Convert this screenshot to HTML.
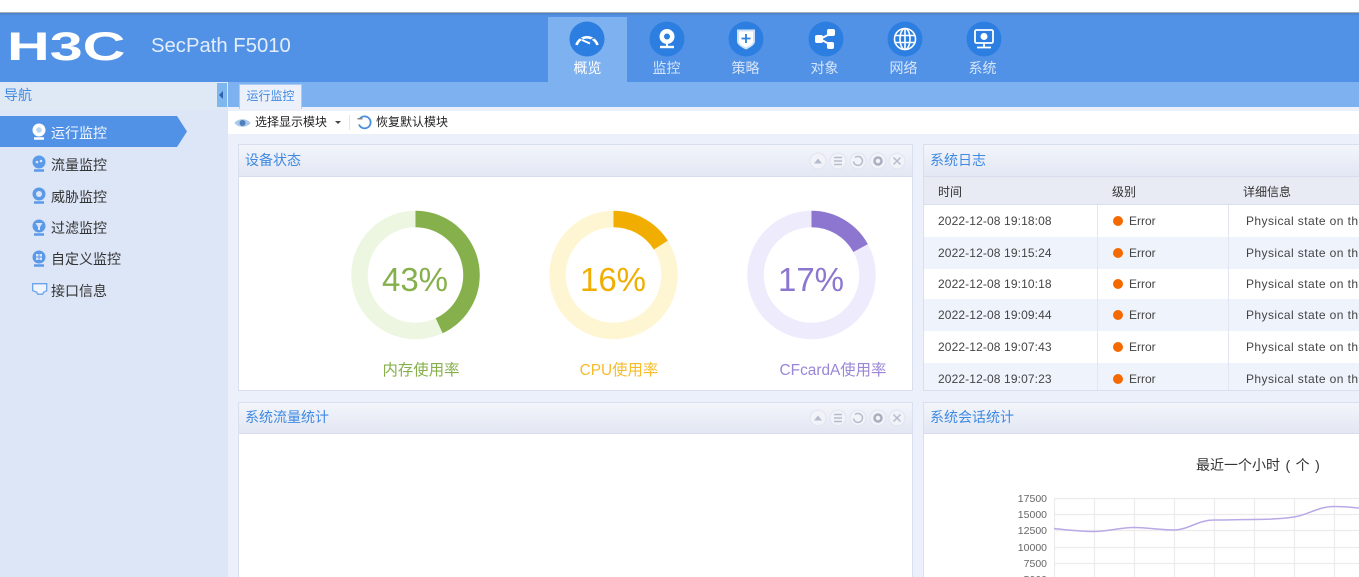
<!DOCTYPE html>
<html lang="zh-CN"><head><meta charset="utf-8"><title>SecPath F5010</title>
<style>
*{box-sizing:border-box}
html,body{margin:0;padding:0;width:1359px;height:577px;overflow:hidden;background:#fff}
body{position:relative;font-family:"Liberation Sans","Noto Sans CJK SC",sans-serif;font-size:14px;color:#333}
.a{position:absolute;white-space:nowrap}
.tab{position:absolute;top:60px;width:79px;text-align:center;color:#d6e5fa;font-size:14px;line-height:16px}
.ic{position:absolute;top:21px;width:36px;height:36px}
.nav{position:absolute;left:51px;font-size:14px;line-height:18px;color:#333}
.panel{position:absolute;background:#fff;border:1px solid #dadff0}
.ph{position:absolute;left:0;right:0;top:0;height:32px;background:linear-gradient(#f3f5fb,#e3e7f3);border-bottom:1px solid #d8ddee}
.pt{position:absolute;left:6px;top:7px;color:#3f8ae2;font-size:14px;line-height:17px}
.btns{position:absolute;left:570px;top:6px}
.row{position:absolute;left:0;width:436px;height:32px;font-size:12px;color:#444;line-height:16px}
.row span{position:absolute;top:8px;white-space:nowrap}
.row span:first-child{letter-spacing:.12px}
.row span:last-child{letter-spacing:.42px}
.dot{position:absolute;left:189px;top:11px;width:10px;height:10px;border-radius:50%;background:#f56a00}
.vl{position:absolute;width:1px;top:60px;height:213px;background:#e3e6f0}
.ytick{position:absolute;width:30px;text-align:right;left:1017px;font-size:10.5px;line-height:12px;color:#666}
</style></head><body>
<div class="a" style="left:0;top:0;width:1359px;height:13px;background:#fff;border-bottom:1px solid #aab0b8"></div>
<div class="a" style="left:0;top:13px;width:1359px;height:69px;background:#5292e6"></div>
<div class="a" style="left:0;top:13px;width:1359px;height:3px;background:linear-gradient(#4a80c8,#5292e6)"></div>
<div class="a" style="left:7px;top:22px;width:60px;height:50px;color:#fff;font:bold 40px/50px 'Liberation Sans',sans-serif;transform-origin:0 50%;transform:scaleX(1.48)">H3C</div>
<div class="a" style="left:151px;top:33px;color:#e4eefb;font-size:20.3px;line-height:26px">SecPath F5010</div>

<div class="a" style="left:548px;top:17px;width:79px;height:65px;background:#7eb1ef"></div>
<svg class="ic" style="left:569px" viewBox="0 0 36 36"><circle cx="18" cy="18" r="17.5" fill="#2c7fe0"/><path d="M7.500 24a11 11 0 0 1 21 0" fill="none" stroke="#fff" stroke-width="2.600"/><path d="M11 17l3 1.500M18 12v3M25 17l-3 1.500M13 19l8 3.500" stroke="#2c7fe0" stroke-width="1.200"/><path d="M13 19l8 3.500" stroke="#fff" stroke-width="1.800"/></svg>
<svg class="ic" style="left:649px" viewBox="0 0 36 36"><circle cx="18" cy="18" r="17.5" fill="#2c7fe0"/><circle cx="18" cy="15.500" r="7.500" fill="#fff"/><circle cx="18" cy="15.500" r="3" fill="#2c7fe0"/><path d="M11 26h14" stroke="#fff" stroke-width="2.400"/><path d="M18 22v3" stroke="#fff" stroke-width="2"/></svg>
<svg class="ic" style="left:728px" viewBox="0 0 36 36"><circle cx="18" cy="18" r="17.5" fill="#2c7fe0"/><path d="M9 8.500h18v12c0 3-4.500 6-9 8-4.500-2-9-5-9-8z" fill="#cfe1f8"/><path d="M11 10.500h14v10c0 2.500-3.500 4.500-7 6-3.500-1.500-7-3.500-7-6z" fill="#fff"/><path d="M18 13v9M13.500 17.500h9" stroke="#2c7fe0" stroke-width="1.800"/></svg>
<svg class="ic" style="left:808px" viewBox="0 0 36 36"><circle cx="18" cy="18" r="17.500" fill="#2c7fe0"/><path d="M12 18L24 12M12 18l11 6" stroke="#fff" stroke-width="2"/><rect x="7" y="14" width="8" height="8" rx="2" fill="#fff"/><rect x="19" y="8" width="8" height="7" rx="2" fill="#fff"/><rect x="19" y="21" width="7" height="7" rx="2" fill="#fff"/></svg>
<svg class="ic" style="left:887px" viewBox="0 0 36 36"><circle cx="18" cy="18" r="17.500" fill="#2c7fe0"/><g fill="none" stroke="#fff" stroke-width="1.600"><circle cx="18" cy="18" r="10.500"/><ellipse cx="18" cy="18" rx="5" ry="10.500"/><path d="M18 7.500v21M8 14.500h20M8 21.500h20"/></g></svg>
<svg class="ic" style="left:966px" viewBox="0 0 36 36"><circle cx="18" cy="18" r="17.500" fill="#2c7fe0"/><rect x="9" y="9" width="18" height="13" rx="1.500" fill="none" stroke="#fff" stroke-width="1.800"/><circle cx="18" cy="15.500" r="3.500" fill="#fff"/><path d="M18 22v4M11 26.500h14" stroke="#fff" stroke-width="1.800"/></svg>
<div class="tab" style="left:548px;color:#fff">概览</div>
<div class="tab" style="left:627px">监控</div>
<div class="tab" style="left:706px">策略</div>
<div class="tab" style="left:785px">对象</div>
<div class="tab" style="left:864px">网络</div>
<div class="tab" style="left:943px">系统</div>

<div class="a" style="left:0;top:82px;width:228px;height:495px;background:#dde6f7"></div>
<div class="a" style="left:0;top:82px;width:227px;height:28px;background:#dfe9f6"></div>
<div class="a" style="left:4px;top:87px;color:#3f8ae2;font-size:14px;line-height:17px">导航</div>
<div class="a" style="left:217px;top:83px;width:10px;height:24px;background:#7eb6ee"></div>
<div class="a" style="left:219px;top:91px;width:0;height:0;border:4px solid transparent;border-right:4px solid #2a63b0;border-left:0"></div>
<svg class="a" style="left:0;top:116px" width="188" height="31"><path d="M0 0H177L187 15.500 177 31H0z" fill="#5292e6"/></svg>
<svg class="a" style="left:32px;top:123px" width="14" height="17" viewBox="0 0 14 17"><circle cx="7" cy="7" r="6.500" fill="#fff"/><circle cx="7" cy="7" r="2.800" fill="#bcd5f3"/><path d="M2 15.500h10" stroke="#fff" stroke-width="2.500"/></svg>
<div class="nav" style="top:124px;color:#f2f7fe">运行监控</div>
<svg class="a" style="left:32px;top:155px" width="14" height="17" viewBox="0 0 14 17"><circle cx="7" cy="7" r="6.500" fill="#5b9ae8"/><circle cx="5" cy="7" r="1.300" fill="#dde6f7"/><circle cx="9" cy="6" r="1.300" fill="#dde6f7"/><path d="M2 15.500h10" stroke="#5b9ae8" stroke-width="2.500"/></svg>
<div class="nav" style="top:156px">流量监控</div>
<svg class="a" style="left:32px;top:187px" width="14" height="17" viewBox="0 0 14 17"><circle cx="7" cy="7" r="6.500" fill="#5b9ae8"/><circle cx="7" cy="7" r="3" fill="#dde6f7"/><path d="M2 15.500h10" stroke="#5b9ae8" stroke-width="2.500"/></svg>
<div class="nav" style="top:188px">威胁监控</div>
<svg class="a" style="left:32px;top:219px" width="14" height="17" viewBox="0 0 14 17"><circle cx="7" cy="7" r="6.500" fill="#5b9ae8"/><path d="M3.500 4h7L8 8v3H6V8z" fill="#dde6f7"/><path d="M2 15.500h10" stroke="#5b9ae8" stroke-width="2.500"/></svg>
<div class="nav" style="top:219px">过滤监控</div>
<svg class="a" style="left:32px;top:250px" width="14" height="17" viewBox="0 0 14 17"><circle cx="7" cy="7" r="6.500" fill="#5b9ae8"/><path d="M4 4h2.500v2.500H4zM7.500 4H10v2.500H7.500zM4 7.500h2.500V10H4zM7.500 7.500H10V10H7.500z" fill="#dde6f7"/><path d="M2 15.500h10" stroke="#5b9ae8" stroke-width="2.500"/></svg>
<div class="nav" style="top:250px">自定义监控</div>
<svg class="a" style="left:32px;top:283px" width="16" height="13" viewBox="0 0 16 13"><path d="M.7.700h14v7l-3 1.500-1 2H5.700l-1-2-4-1.500z" fill="#eef3fc" stroke="#6ba3ea" stroke-width="1.300"/></svg>
<div class="nav" style="top:282px">接口信息</div>

<div class="a" style="left:228px;top:82px;width:1131px;height:495px;background:#ecf0fa"></div>
<div class="a" style="left:228px;top:82px;width:1131px;height:25px;background:#7eb1ef"></div>
<div class="a" style="left:239px;top:84px;width:63px;height:25px;background:#ecf0fa;border:1px solid #a9ccf3;border-bottom:0;color:#3f8ae2;font-size:12px;line-height:22px;text-align:center">运行监控</div>
<div class="a" style="left:228px;top:111px;width:1131px;height:23px;background:#fff"></div>
<svg class="a" style="left:234px;top:117px" width="17" height="12" viewBox="0 0 17 12"><path d="M.5 6C4 1 13 1 16.500 6 13 11 4 11 .5 6z" fill="#a9c8ee"/><circle cx="8.500" cy="6" r="3" fill="#4e7fb8"/></svg>
<div class="a" style="left:255px;top:114px;font-size:12px;line-height:16px;color:#222">选择显示模块</div>
<div class="a" style="left:335px;top:121px;width:0;height:0;border:3px solid transparent;border-top:3px solid #444;border-bottom:0"></div>
<div class="a" style="left:349px;top:115px;width:1px;height:15px;background:#e4e7ef"></div>
<svg class="a" style="left:357px;top:115px" width="15" height="15" viewBox="0 0 15 15"><path d="M3 3.500A6 6 0 1 1 2 9.500" fill="none" stroke="#4a8fdc" stroke-width="1.800"/><path d="M.5 3h5v1.500h-5z" fill="#888"/></svg>
<div class="a" style="left:376px;top:114px;font-size:12px;line-height:16px;color:#222">恢复默认模块</div>

<!-- device state -->
<div class="panel" style="left:238px;top:144px;width:675px;height:247px">
 <div class="ph"></div><div class="pt">设备状态</div>
 <svg class="btns" width="100" height="20" viewBox="0 0 100 20"><g fill="#f1f3f9" stroke="#e0e4ef"><circle cx="9" cy="10" r="8"/><circle cx="29" cy="10" r="8"/><circle cx="49" cy="10" r="8"/><circle cx="69" cy="10" r="8"/><circle cx="88" cy="10" r="8"/></g><path d="M5 12.500l4-5 4 5z" fill="#b6bccb"/><path d="M25 6.500h8M25 10h8M25 13.500h8" stroke="#b6bccb" stroke-width="1.500"/><path d="M46 6.500a4.500 4.500 0 1 1-1.500 4" fill="none" stroke="#b6bccb" stroke-width="1.500"/><circle cx="69" cy="10" r="3.500" fill="none" stroke="#a9afbf" stroke-width="2.500"/><path d="M84.500 6.500l7 7M91.500 6.500l-7 7" stroke="#b6bccb" stroke-width="1.500"/></svg>
</div>
<svg class="a" style="left:340px;top:200px" width="560" height="150" viewBox="340 200 560 150">
 <g fill="none" stroke-width="16.500">
 <circle cx="415.500" cy="275" r="56" stroke="#edf6e1"/>
 <circle cx="415.500" cy="275" r="56" stroke="#85b04b" stroke-dasharray="151.300 352" transform="rotate(-90 415.500 275)"/>
 <circle cx="613.500" cy="275" r="56" stroke="#fef6d2"/>
 <circle cx="613.500" cy="275" r="56" stroke="#f2ae00" stroke-dasharray="56.300 352" transform="rotate(-90 613.500 275)"/>
 <circle cx="811.500" cy="275" r="56" stroke="#eeebfc"/>
 <circle cx="811.500" cy="275" r="56" stroke="#8d76cf" stroke-dasharray="59.800 352" transform="rotate(-90 811.500 275)"/>
 </g>
</svg>
<div class="a" style="left:365px;top:260px;width:100px;text-align:center;font-size:33px;line-height:40px;color:#85b04b">43%</div>
<div class="a" style="left:563px;top:260px;width:100px;text-align:center;font-size:33px;line-height:40px;color:#f2ae00">16%</div>
<div class="a" style="left:761px;top:260px;width:100px;text-align:center;font-size:33px;line-height:40px;color:#8d76cf">17%</div>
<div class="a" style="left:371px;top:362px;width:100px;text-align:center;color:#85b04b;font-size:15.400px;line-height:18px">内存使用率</div>
<div class="a" style="left:569px;top:362px;width:100px;text-align:center;color:#f5bb2a;font-size:15.400px;line-height:18px">CPU使用率</div>
<div class="a" style="left:773px;top:362px;width:120px;text-align:center;color:#9a86d6;font-size:15.400px;line-height:18px">CFcardA使用率</div>

<!-- traffic -->
<div class="panel" style="left:238px;top:402px;width:675px;height:180px">
 <div class="ph" style="height:31px"></div><div class="pt" style="top:6px">系统流量统计</div>
 <svg class="btns" style="top:5px" width="100" height="20" viewBox="0 0 100 20"><g fill="#f1f3f9" stroke="#e0e4ef"><circle cx="9" cy="10" r="8"/><circle cx="29" cy="10" r="8"/><circle cx="49" cy="10" r="8"/><circle cx="69" cy="10" r="8"/><circle cx="88" cy="10" r="8"/></g><path d="M5 12.500l4-5 4 5z" fill="#b6bccb"/><path d="M25 6.500h8M25 10h8M25 13.500h8" stroke="#b6bccb" stroke-width="1.500"/><path d="M46 6.500a4.500 4.500 0 1 1-1.500 4" fill="none" stroke="#b6bccb" stroke-width="1.500"/><circle cx="69" cy="10" r="3.500" fill="none" stroke="#a9afbf" stroke-width="2.500"/><path d="M84.500 6.500l7 7M91.500 6.500l-7 7" stroke="#b6bccb" stroke-width="1.500"/></svg>
</div>

<!-- log -->
<div class="panel" style="left:923px;top:144px;width:440px;height:247px;overflow:hidden">
 <div class="ph"></div><div class="pt">系统日志</div>
 <div class="a" style="left:0;top:32px;width:440px;height:28px;background:#e8ebf3;border-bottom:1px solid #dadff0;font-size:12px;color:#333"><span class="a" style="left:14px;top:6px">时间</span><span class="a" style="left:188px;top:6px">级别</span><span class="a" style="left:319px;top:6px">详细信息</span></div>
 <div class="row" style="top:60px"><span style="left:14px">2022-12-08 19:18:08</span><i class="dot"></i><span style="left:205px">Error</span><span style="left:322px">Physical state on the interface</span></div>
 <div class="row" style="top:92px;background:#eff3fc"><span style="left:14px">2022-12-08 19:15:24</span><i class="dot"></i><span style="left:205px">Error</span><span style="left:322px">Physical state on the interface</span></div>
 <div class="row" style="top:123px"><span style="left:14px">2022-12-08 19:10:18</span><i class="dot"></i><span style="left:205px">Error</span><span style="left:322px">Physical state on the interface</span></div>
 <div class="row" style="top:154px;background:#eff3fc"><span style="left:14px">2022-12-08 19:09:44</span><i class="dot"></i><span style="left:205px">Error</span><span style="left:322px">Physical state on the interface</span></div>
 <div class="row" style="top:186px"><span style="left:14px">2022-12-08 19:07:43</span><i class="dot"></i><span style="left:205px">Error</span><span style="left:322px">Physical state on the interface</span></div>
 <div class="row" style="top:218px;background:#eff3fc"><span style="left:14px">2022-12-08 19:07:23</span><i class="dot"></i><span style="left:205px">Error</span><span style="left:322px">Physical state on the interface</span></div>
 <div class="vl" style="left:173px"></div><div class="vl" style="left:304px"></div>
</div>

<!-- session -->
<div class="panel" style="left:923px;top:402px;width:440px;height:180px">
 <div class="ph" style="height:31px"></div><div class="pt" style="top:6px">系统会话统计</div>
</div>
<div class="a" style="left:1196px;top:456px;color:#333;line-height:18px;word-spacing:1.600px">最近一个小时 ( 个 )</div>
<svg class="a" style="left:1040px;top:490px" width="319" height="87" viewBox="1040 490 319 87">
 <g stroke="#eeebef" stroke-width="1.200" fill="none">
 <path d="M1054 498.500H1359M1054 514.500H1359M1054 530.500H1359M1054 547.500H1359M1054 563.500H1359"/>
 <path d="M1054.500 498V577M1094.500 498V577M1134.500 498V577M1174.500 498V577M1214.500 498V577M1254.500 498V577M1294.500 498V577M1334.500 498V577"/>
 </g>
 <path d="M1054 528.500C1068 530 1080 531.500 1094 531.500S1120 527.500 1134 527.500 1160 530 1174 530 1198 520 1214 520 1240 519.500 1254 519.500 1280 519 1294 517 1318 506.500 1334 506.500 1350 507.500 1359 508" fill="none" stroke="#b9a9e6" stroke-width="1.500"/>
</svg>
<div class="ytick" style="top:493px">17500</div>
<div class="ytick" style="top:509px">15000</div>
<div class="ytick" style="top:525px">12500</div>
<div class="ytick" style="top:542px">10000</div>
<div class="ytick" style="top:558px">7500</div>
<div class="ytick" style="top:574px">5000</div>
</body></html>
